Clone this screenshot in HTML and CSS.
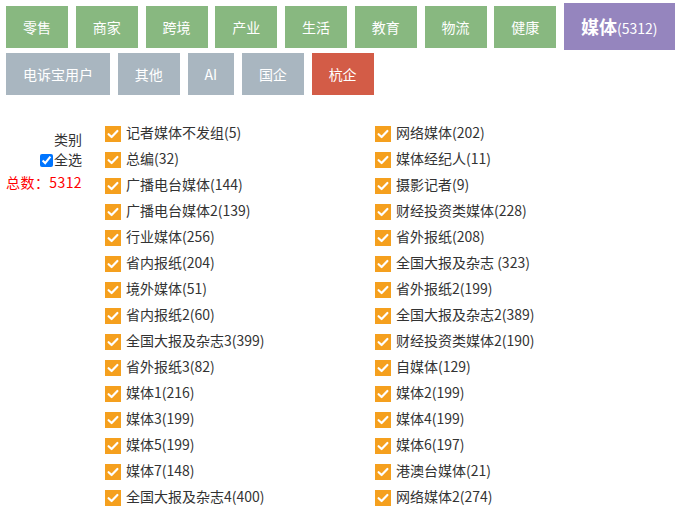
FILE: index.html
```html
<!DOCTYPE html>
<html>
<head>
    <meta charset="utf-8">
    <link rel="stylesheet" href="styles.css">
</head>
<body>
    <div class="tabs">
        <a class="tab green">零售</a>
        <a class="tab green">商家</a>
        <a class="tab green">跨境</a>
        <a class="tab green">产业</a>
        <a class="tab green">生活</a>
        <a class="tab green">教育</a>
        <a class="tab green">物流</a>
        <a class="tab green">健康</a>
        <a class="tab active"><b>媒体</b>(5312)</a>
        <a class="tab gray">电诉宝用户</a>
        <a class="tab gray">其他</a>
        <a class="tab gray">AI</a>
        <a class="tab gray">国企</a>
        <a class="tab red">杭企</a>
    </div>

    <div class="filter">
        <div class="side">
            <div class="side-title">类别</div>
            <label class="check-all"><input type="checkbox" checked>全选</label>
            <div class="total">总数：5312</div>
        </div>

        <div class="cat-list" id="catList"></div>
    </div>

    <script>
        const cats = [
            "记者媒体不发组(5)", "网络媒体(202)",
            "总编(32)", "媒体经纪人(11)",
            "广播电台媒体(144)", "摄影记者(9)",
            "广播电台媒体2(139)", "财经投资类媒体(228)",
            "行业媒体(256)", "省外报纸(208)",
            "省内报纸(204)", "全国大报及杂志 (323)",
            "境外媒体(51)", "省外报纸2(199)",
            "省内报纸2(60)", "全国大报及杂志2(389)",
            "全国大报及杂志3(399)", "财经投资类媒体2(190)",
            "省外报纸3(82)", "自媒体(129)",
            "媒体1(216)", "媒体2(199)",
            "媒体3(199)", "媒体4(199)",
            "媒体5(199)", "媒体6(197)",
            "媒体7(148)", "港澳台媒体(21)",
            "全国大报及杂志4(400)", "网络媒体2(274)"
        ];

        const list = document.getElementById("catList");
        cats.forEach(function (name) {
            const item = document.createElement("label");
            item.className = "cat";
            item.innerHTML =
                '<span class="box"><svg viewBox="0 0 16 16" width="16" height="16">' +
                '<path d="M3.6 8.2 L6.6 11 L12.4 5" fill="none" stroke="#fff" stroke-width="2.2" stroke-linecap="round" stroke-linejoin="round"/>' +
                '</svg></span><span class="cat-name"></span>';
            item.querySelector(".cat-name").textContent = name;
            list.appendChild(item);
        });
    </script>
</body>
</html>
```
FILE: styles.css
```css
body {
    margin: 0;
    font-family: "Noto Sans CJK SC", "Noto Sans", sans-serif;
    font-size: 14px;
    color: #333;
    background: #fff;
}

.tabs {
    display: flex;
    flex-wrap: wrap;
    align-items: flex-start;
    padding: 3px 0 0 6px;
    column-gap: 7.75px;
}

.tab {
    display: block;
    height: 42px;
    line-height: 42px;
    margin-top: 3px;
    padding: 0 17px;
    color: #fff;
    font-size: 14px;
    cursor: pointer;
}

.tab.green {
    background-color: #88b880;
}

.tab.gray {
    background-color: #a9b6c0;
}

.tab.red {
    background-color: #d35c47;
}

.tab.active {
    height: 47px;
    line-height: 47px;
    margin-top: 0;
    padding: 0 17px 0 17px;
    background-color: #9585be;
}

.tab.active b {
    font-size: 18px;
}

.filter {
    display: flex;
    margin-top: 24px;
}

.side {
    width: 82px;
    text-align: right;
    padding-top: 10px;
}

.side-title {
    line-height: 20px;
}

.check-all {
    display: block;
    line-height: 20px;
}

.check-all input {
    width: 13px;
    height: 13px;
    margin: 0 1px 0 0;
    vertical-align: -2px;
}

.total {
    color: #f00;
    line-height: 20px;
    margin-top: 3px;
    letter-spacing: 0.4px;
}

.cat-list {
    display: grid;
    grid-template-columns: 270px 270px;
    grid-auto-rows: 26px;
    margin-left: 23px;
}

.cat {
    display: flex;
    align-items: center;
    line-height: 26px;
    white-space: nowrap;
}

.box {
    display: block;
    width: 16px;
    height: 16px;
    background-color: #f5a01e;
    margin: 3px 5px 0 0;
}

.box svg {
    display: block;
}
```
